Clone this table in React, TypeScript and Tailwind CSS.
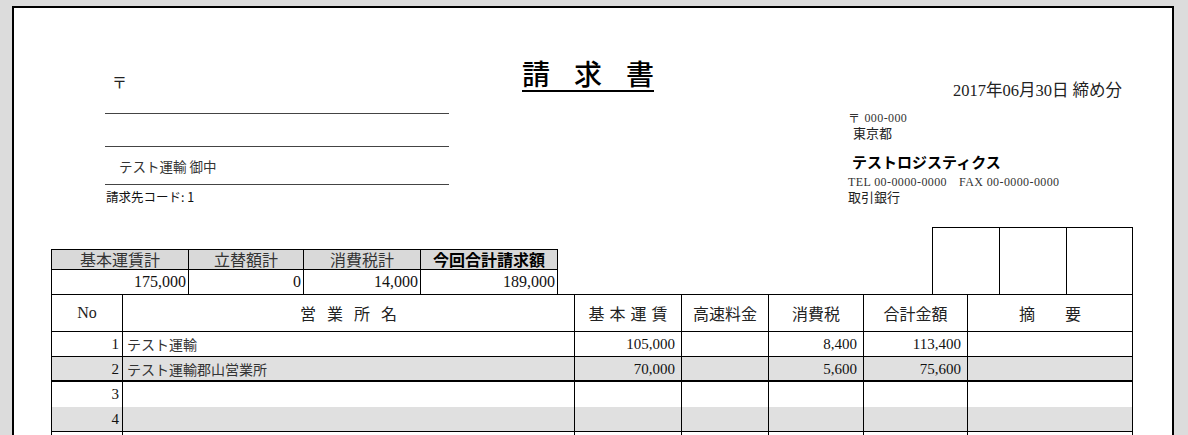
const serif = "font-['Liberation_Serif','Noto_Sans_CJK_JP',serif]";
const sans = "font-['Noto_Sans_CJK_JP',sans-serif]";

const mainCols = "grid grid-cols-[71px_452px_107px_87px_95px_104px_165px]";

const rows = [
  { no: "1", name: "テスト運輸", base: "105,000", highway: "", tax: "8,400", total: "113,400", gray: false, line: "border-b border-black" },
  { no: "2", name: "テスト運輸郡山営業所", base: "70,000", highway: "", tax: "5,600", total: "75,600", gray: true, line: "border-b-2 border-black" },
  { no: "3", name: "", base: "", highway: "", tax: "", total: "", gray: false, line: "" },
  { no: "4", name: "", base: "", highway: "", tax: "", total: "", gray: true, line: "border-b border-black" },
  { no: "", name: "", base: "", highway: "", tax: "", total: "", gray: false, line: "" },
];

function Spaced({ chars, gap }: { chars: string[]; gap: string }) {
  return (
    <div className={`flex justify-center ${gap}`}>
      {chars.map((c, i) => (
        <span key={i}>{c}</span>
      ))}
    </div>
  );
}

export default function App() {
  return (
    <div className={`h-[435px] w-[1188px] overflow-hidden bg-[#dcdcdc] text-[#111] ${serif}`}>
      <div className="ml-[12px] mt-[6px] h-[440px] w-[1162px] border-2 border-b-0 border-black bg-white">
        {/* header block */}
        <div className="flex h-[219px] items-start">
          <div className={`ml-[91px] mt-[65px] w-[344px] ${sans}`}>
            <div className="h-[41px] border-b border-[#444] pl-[7px] pt-[1px] text-[15px] leading-[16px] text-[#222]">〒</div>
            <div className="h-[33px] border-b border-[#444]" />
            <div className="flex h-[38px] items-center border-b border-[#444] pl-[14px] text-[13.5px] leading-[16px] text-[#333]">
              テスト運輸 御中
            </div>
            <div className="pl-[1px] pt-[4px] text-[12.5px] leading-[16px] text-[#111]">請求先コード: 1</div>
          </div>

          <div className="ml-[73px] mt-[54px] flex gap-[24px] border-b-2 border-black text-[28px] leading-[28px] font-medium text-black">
            <span>請</span>
            <span>求</span>
            <span>書</span>
          </div>

          <div className="ml-[194px] mt-[73px] w-[274px] text-[#222]">
            <div className="text-right text-[16.5px] leading-[20px]">2017年06月30日 締め分</div>
            <div className="mt-[10px] flex items-center gap-[4px] text-[12px] leading-[14px] tracking-[0.4px] text-[#333]">
              <span className={sans}>〒</span>
              <span>000-000</span>
            </div>
            <div className={`pl-[5px] text-[13px] leading-[15px] ${sans}`}>東京都</div>
            <div className={`mt-[12px] pl-[4px] text-[15px] leading-[20px] font-bold text-black ${sans}`}>テストロジスティクス</div>
            <div className="mt-[3px] flex gap-[12px] text-[12px] leading-[14px] tracking-[0.4px] text-[#333]">
              <span>TEL 00-0000-0000</span>
              <span>FAX 00-0000-0000</span>
            </div>
            <div className={`text-[13px] leading-[15px] ${sans}`}>取引銀行</div>
          </div>
        </div>

        {/* totals + stamp boxes */}
        <div className="ml-[37px] w-[1082px]">
          <div className="flex items-end">
            <div className="border-l border-t border-black">
              <div className={`grid grid-cols-[137px_115px_117px_137px] border-b border-black bg-[#d9d9d9] text-center text-[16px] leading-[19px] ${sans}`}>
                <div className="border-r border-black text-[#333]">基本運賃計</div>
                <div className="border-r border-black text-[#333]">立替額計</div>
                <div className="border-r border-black text-[#333]">消費税計</div>
                <div className="border-r border-black font-bold text-black">今回合計請求額</div>
              </div>
              <div className="grid grid-cols-[137px_115px_117px_137px] text-right text-[16px] leading-[24px]">
                <div className="border-r border-black pr-[2px]">175,000</div>
                <div className="border-r border-black pr-[2px]">0</div>
                <div className="border-r border-black pr-[2px]">14,000</div>
                <div className="border-r border-black pr-[2px]">189,000</div>
              </div>
            </div>
            <div className="ml-auto grid h-[67px] grid-cols-[67px_67px_66px] border-l border-t border-black">
              <div className="border-r border-black" />
              <div className="border-r border-black" />
              <div className="border-r border-black" />
            </div>
          </div>

          {/* detail table */}
          <div className="border-l border-t border-black">
            <div className={`${mainCols} h-[37px] items-stretch border-b border-black text-[16px] leading-[20px] text-[#222]`}>
              <div className="flex items-center justify-center border-r border-black">No</div>
              <div className={`flex items-center justify-center border-r border-black ${sans}`}>
                <Spaced chars={["営", "業", "所", "名"]} gap="gap-[11px]" />
              </div>
              <div className={`flex items-center justify-center border-r border-black ${sans}`}>
                <Spaced chars={["基", "本", "運", "賃"]} gap="gap-[5px]" />
              </div>
              <div className={`flex items-center justify-center border-r border-black ${sans}`}>高速料金</div>
              <div className={`flex items-center justify-center border-r border-black ${sans}`}>消費税</div>
              <div className={`flex items-center justify-center border-r border-black ${sans}`}>合計金額</div>
              <div className={`flex items-center justify-center border-r border-black ${sans}`}>
                <Spaced chars={["摘", "要"]} gap="gap-[30px]" />
              </div>
            </div>
            {rows.map((r, i) => (
              <div
                key={i}
                className={`${mainCols} h-[25px] text-[15px] leading-[24px] ${r.gray ? "bg-[#e0e0e0]" : "bg-white"} ${r.line}`}
              >
                <div className="border-r border-black pr-[3px] text-right">{r.no}</div>
                <div className={`border-r border-black pl-[4px] text-[14px] text-[#333] ${sans}`}>{r.name}</div>
                <div className="border-r border-black pr-[6px] text-right">{r.base}</div>
                <div className="border-r border-black pr-[6px] text-right">{r.highway}</div>
                <div className="border-r border-black pr-[6px] text-right">{r.tax}</div>
                <div className="border-r border-black pr-[6px] text-right">{r.total}</div>
                <div className="border-r border-black" />
              </div>
            ))}
          </div>
        </div>
      </div>
    </div>
  );
}
